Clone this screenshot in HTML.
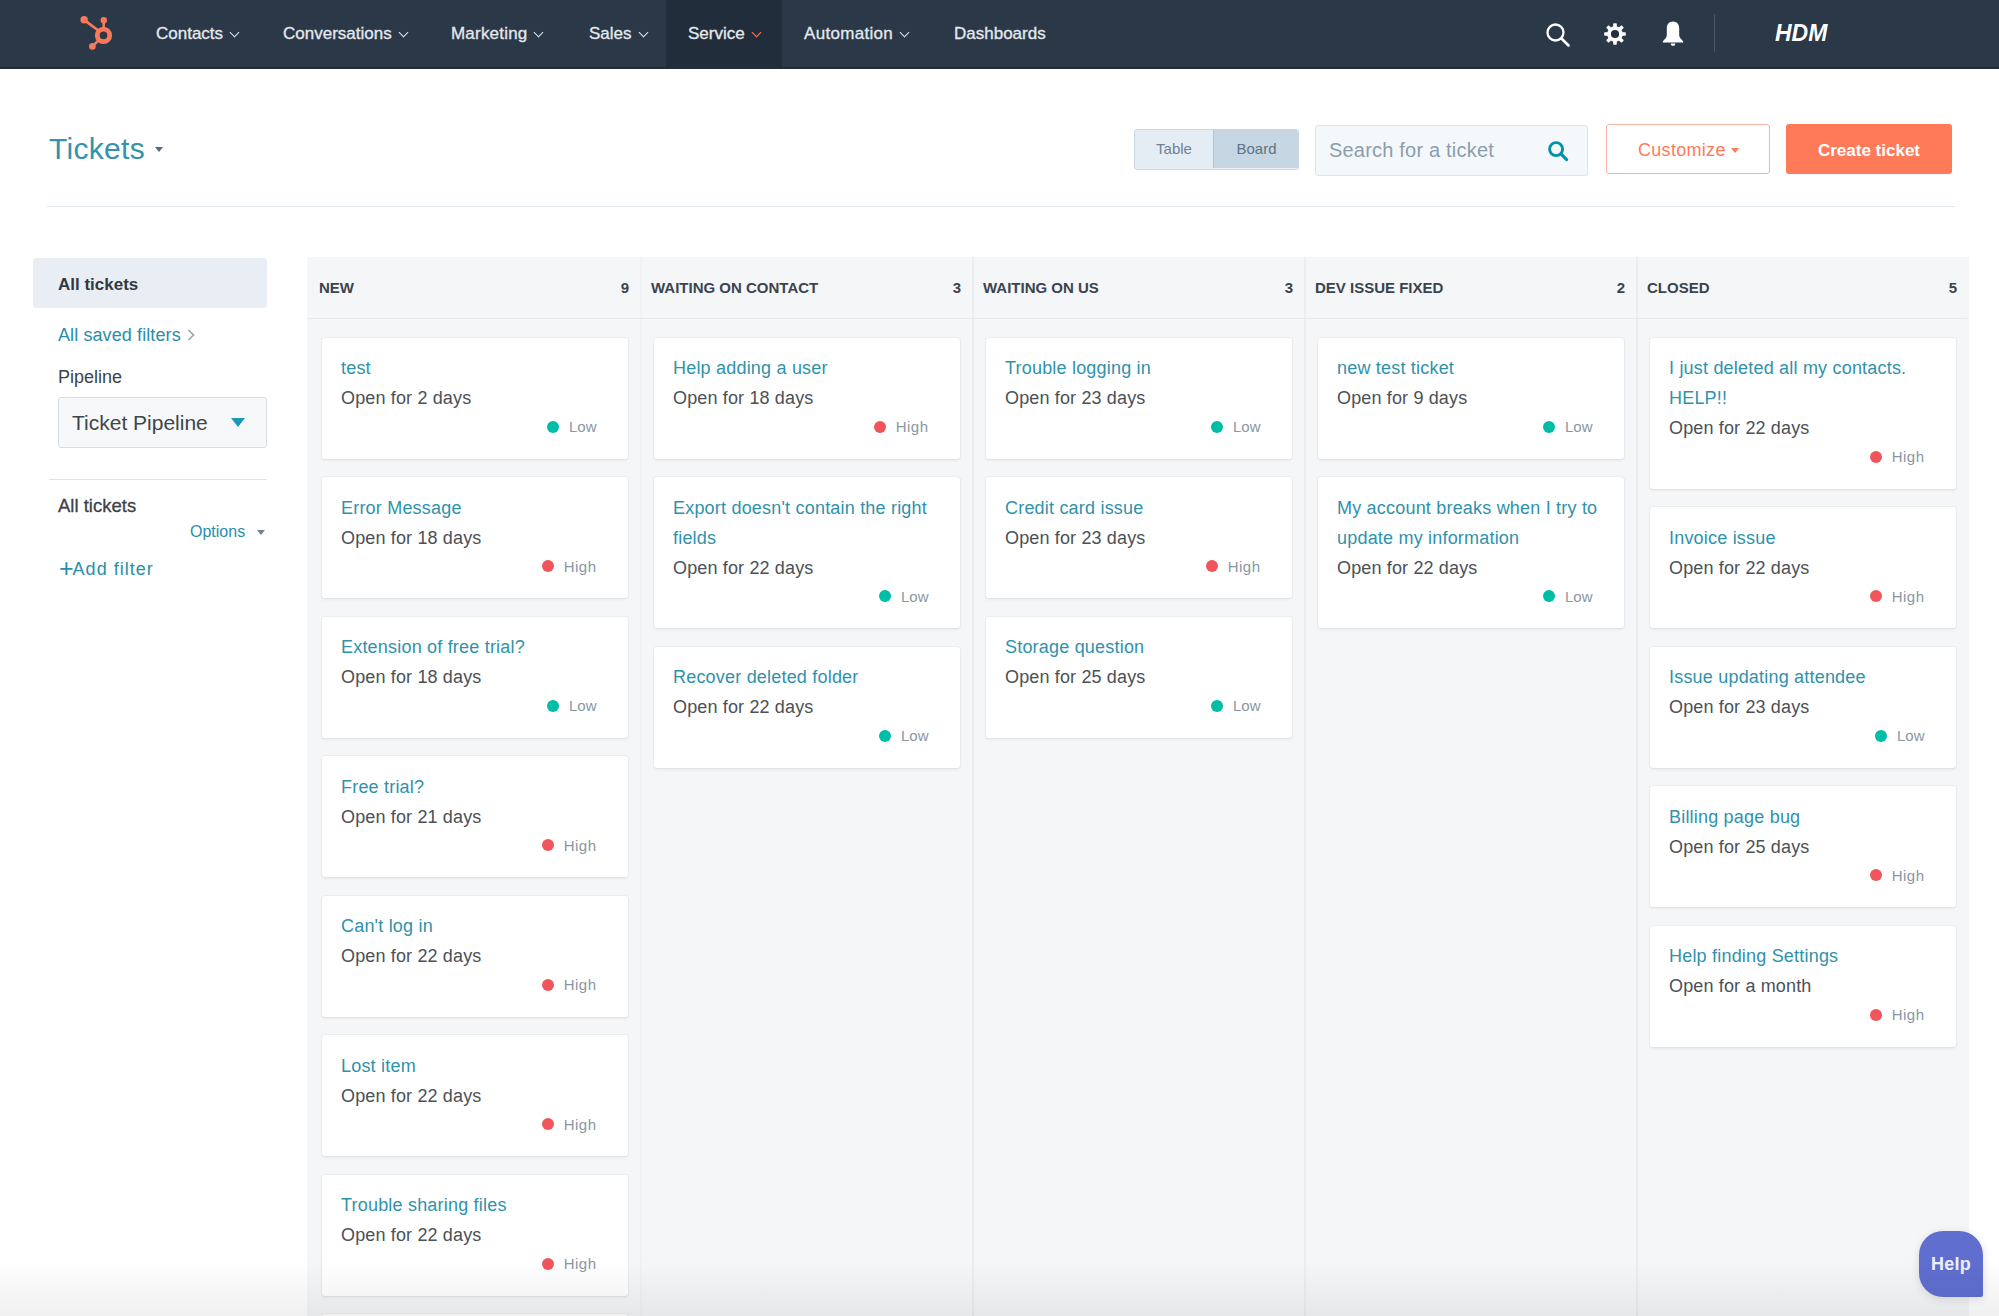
<!DOCTYPE html>
<html><head><meta charset="utf-8">
<style>
*{box-sizing:border-box;margin:0;padding:0}
html,body{width:1999px;height:1316px;overflow:hidden;background:#fff;font-family:"Liberation Sans",sans-serif;color:#33475b}
.nav{position:absolute;left:0;top:0;width:1999px;height:69px;background:#2b3848;border-bottom:2px solid #222d38}
.nav .sel{position:absolute;left:666px;top:0;width:116px;height:67px;background:#212d3b}
.ni{position:absolute;top:22.5px;font-size:17px;line-height:22px;color:#e4e9ee;white-space:nowrap;-webkit-text-stroke:0.3px #e4e9ee}
.chev{display:inline-block;width:7px;height:7px;border-right:1.8px solid #dfe5eb;border-bottom:1.8px solid #dfe5eb;transform:rotate(45deg);margin-left:8px;position:relative;top:-3px}
.title{position:absolute;left:49px;top:129px;font-size:30px;line-height:40px;color:#3592ac;letter-spacing:0.3px}
.hline{position:absolute;left:47px;top:206px;width:1908px;height:1px;background:#e3e8ee}
.board{position:absolute;left:307px;top:257px;width:1662px;height:1059px;background:#f5f6f8}
.colhead{position:absolute;top:257px;width:332px;height:62px;border-bottom:1px solid #e6eaee}
.colhead .cn{position:absolute;left:12px;top:21px;font-size:15px;line-height:20px;font-weight:bold;color:#3a444e}
.colhead .cc{position:absolute;right:10px;top:21px;font-size:15px;line-height:20px;font-weight:bold;color:#3a444e}
.colsep{position:absolute;top:257px;width:2px;height:1059px;background:#ecedf0}
.card{position:absolute;width:306.5px;background:#fff;border-radius:3px;box-shadow:0 0 0 1px rgba(20,40,60,0.035),0 1.5px 3px rgba(0,0,0,0.05);padding:15.5px 31.5px 0 19.5px}
.card .t{font-size:18px;line-height:30px;color:#2f92ac;letter-spacing:0.2px;white-space:nowrap}
.card .b{font-size:18px;line-height:30px;color:#4b5156;letter-spacing:0.15px}
.card .p{font-size:15px;line-height:30px;color:#8a96a3;text-align:right;margin-top:-1px}
.card .p.hi{letter-spacing:0.5px}
.card .p i{display:inline-block;width:12px;height:12px;border-radius:50%;margin-right:10px;position:relative;top:0.5px}
.card .p.lo i{background:#00bda5}
.card .p.hi i{background:#f2545b}

.tcaret{position:absolute;left:155px;top:147px;width:0;height:0;border-left:4.5px solid transparent;border-right:4.5px solid transparent;border-top:5px solid #4f6a86}
.toggle{position:absolute;left:1134px;top:128.5px;width:165px;height:41px;border:1px solid #cbd6e2;border-radius:3px;overflow:hidden;background:#eaf0f6}
.toggle .tb{position:absolute;top:0;height:38px;line-height:37px;font-size:15px;color:#6f8294;text-align:center}
.toggle .tb1{left:0;width:78px;background:#e5edf4}
.toggle .tb2{left:78px;width:86px;background:#c6d6e3;border-left:1px solid #b4c4d4;color:#5f7386}
.search{position:absolute;left:1315px;top:125px;width:273px;height:50.5px;border:1px solid #dfe3eb;border-radius:3px;background:#f5f8fa}
.search .ph{position:absolute;left:13px;top:12px;font-size:20px;line-height:24px;color:#8b9dae;letter-spacing:0.2px}
.search svg{position:absolute;left:231px;top:14px}
.cust{position:absolute;left:1606px;top:124px;width:164px;height:50px;border:1px solid #f5b3a3;border-radius:3px;background:#fff}
.cust span{position:absolute;left:31px;top:13px;font-size:18px;line-height:24px;color:#ff7a59;letter-spacing:0.3px}
.cust i{position:absolute;left:124px;top:23px;width:0;height:0;border-left:4.5px solid transparent;border-right:4.5px solid transparent;border-top:5px solid #ff7a59}
.create{position:absolute;left:1786px;top:124px;width:166px;height:50px;border-radius:3px;background:#ff7a59}
.create span{position:absolute;left:0;width:166px;text-align:center;top:14.5px;font-size:17px;line-height:24px;color:#fff;font-weight:bold}
.side-sel{position:absolute;left:33px;top:258px;width:234px;height:50px;background:#e9eef4;border-radius:3px}
.sd{position:absolute;white-space:nowrap}
.dd{position:absolute;left:58px;top:397px;width:209px;height:51px;border:1px solid #d6dde4;border-radius:3px;background:#f6f8fa}
.dd span{position:absolute;left:13px;top:12px;font-size:21px;line-height:26px;color:#40464c}
.dd i{position:absolute;left:172px;top:20px;width:0;height:0;border-left:7.5px solid transparent;border-right:7.5px solid transparent;border-top:9px solid #1d98bb}
.sline{position:absolute;left:49px;top:479px;width:218px;height:1px;background:#e0e3e7}
.help{position:absolute;left:1919px;top:1230.5px;width:64px;height:66px;background:#5f6ecf;border-radius:24px 24px 2px 24px;color:#eef0ff;font-size:18px;font-weight:bold;line-height:66px;text-align:center;box-shadow:0 2px 10px rgba(0,0,0,0.12);letter-spacing:0.2px}
.bfade{position:absolute;left:0;top:1260px;width:1999px;height:56px;background:linear-gradient(to bottom,rgba(0,0,0,0),rgba(0,0,0,0.06))}
</style></head><body>
<div class="nav">
  <div class="sel"></div>
  <div class="ni" style="left:156px">Contacts<span class="chev"></span></div>
  <div class="ni" style="left:283px">Conversations<span class="chev"></span></div>
  <div class="ni" style="left:451px;letter-spacing:0.2px">Marketing<span class="chev"></span></div>
  <div class="ni" style="left:589px">Sales<span class="chev"></span></div>
  <div class="ni" style="left:688px">Service<span class="chev" style="border-color:#ff7a59"></span></div>
  <div class="ni" style="left:804px;letter-spacing:0.3px">Automation<span class="chev"></span></div>
  <div class="ni" style="left:954px">Dashboards</div>
<svg style="position:absolute;left:70px;top:8px" width="55" height="50" viewBox="0 0 55 50">
<g fill="none" stroke="#f97a5a" stroke-linecap="round">
<circle cx="33.5" cy="27.4" r="6.2" stroke-width="4.8"/>
<line x1="14.1" y1="11.8" x2="29" y2="23" stroke-width="2.8"/>
<line x1="33.8" y1="12.5" x2="33.6" y2="20" stroke-width="2.6"/>
<line x1="22.4" y1="38.4" x2="28.5" y2="32.5" stroke-width="2.6"/>
</g>
<g fill="#f97a5a"><circle cx="14.1" cy="11.8" r="3.7"/><circle cx="33.8" cy="12.2" r="3.2"/><circle cx="22.4" cy="38.4" r="3.3"/></g>
</svg>
<svg style="position:absolute;left:1545px;top:22px" width="26" height="26" viewBox="0 0 26 26"><circle cx="10.5" cy="10.5" r="8" fill="none" stroke="#fff" stroke-width="2.3"/><line x1="16.5" y1="16.5" x2="23.5" y2="23.5" stroke="#fff" stroke-width="2.6" stroke-linecap="round"/></svg>
<svg style="position:absolute;left:1603px;top:21.5px" width="24" height="24" viewBox="-12 -12 24 24"><circle r="7.8" fill="#fff"/><rect x="-1.8" y="-10.8" width="3.6" height="5" rx="0.8" fill="#fff" transform="rotate(0)"/><rect x="-1.8" y="-10.8" width="3.6" height="5" rx="0.8" fill="#fff" transform="rotate(45)"/><rect x="-1.8" y="-10.8" width="3.6" height="5" rx="0.8" fill="#fff" transform="rotate(90)"/><rect x="-1.8" y="-10.8" width="3.6" height="5" rx="0.8" fill="#fff" transform="rotate(135)"/><rect x="-1.8" y="-10.8" width="3.6" height="5" rx="0.8" fill="#fff" transform="rotate(180)"/><rect x="-1.8" y="-10.8" width="3.6" height="5" rx="0.8" fill="#fff" transform="rotate(225)"/><rect x="-1.8" y="-10.8" width="3.6" height="5" rx="0.8" fill="#fff" transform="rotate(270)"/><rect x="-1.8" y="-10.8" width="3.6" height="5" rx="0.8" fill="#fff" transform="rotate(315)"/><circle r="4.1" fill="#252f44"/></svg>
<svg style="position:absolute;left:1661px;top:20px" width="24" height="28" viewBox="0 0 24 28"><path fill="#fff" d="M12 1.5c3.6 0 6.2 2.8 6.2 6.6v6.6c0 1.6.6 2.9 1.7 4.1l2.2 2.4v1.2H1.9v-1.2l2.2-2.4c1.1-1.2 1.7-2.5 1.7-4.1V8.1C5.8 4.3 8.4 1.5 12 1.5z"/><path fill="#fff" d="M9.6 23.6h4.8a2.4 2.4 0 0 1-4.8 0z"/></svg>
<div style="position:absolute;left:1714px;top:14px;width:1px;height:38px;background:#46566a"></div>
<div style="position:absolute;left:1775px;top:19px;font-size:23px;line-height:28px;font-weight:bold;font-style:italic;color:#fff">HDM</div>
</div>
<div class="title">Tickets</div>
<div class="hline"></div>
<div class="tcaret"></div>
<div class="toggle"><div class="tb tb1">Table</div><div class="tb tb2">Board</div></div>
<div class="search"><div class="ph">Search for a ticket</div><svg width="23" height="23" viewBox="0 0 24 24"><circle cx="9.5" cy="9.5" r="6.8" fill="none" stroke="#0091ae" stroke-width="3"/><line x1="14.5" y1="14.5" x2="20.5" y2="20.5" stroke="#0091ae" stroke-width="3.2" stroke-linecap="round"/></svg></div>
<div class="cust"><span>Customize</span><i></i></div>
<div class="create"><span>Create ticket</span></div>
<div class="side-sel"></div>
<div class="sd" style="left:58px;top:273.5px;font-size:17px;line-height:22px;font-weight:bold;color:#33393f">All tickets</div>
<div class="sd" style="left:58px;top:323.5px;font-size:18px;line-height:22px;color:#2a8ea8;letter-spacing:0.1px">All saved filters</div>
<svg style="position:absolute;left:186px;top:328px" width="10" height="14" viewBox="0 0 10 14"><path d="M2.5 2 L7.5 7 L2.5 12" fill="none" stroke="#98a4b0" stroke-width="1.6"/></svg>
<div class="sd" style="left:58px;top:366px;font-size:18px;line-height:22px;color:#3c4248">Pipeline</div>
<div class="dd"><span>Ticket Pipeline</span><i></i></div>
<div class="sline"></div>
<div class="sd" style="left:58px;top:494.5px;font-size:18.5px;line-height:22px;color:#3c4248;-webkit-text-stroke:0.3px #3c4248">All tickets</div>
<div class="sd" style="left:190px;top:521px;font-size:16px;line-height:22px;color:#2a8ea8">Options</div>
<div style="position:absolute;left:257px;top:530px;width:0;height:0;border-left:4.5px solid transparent;border-right:4.5px solid transparent;border-top:5px solid #6f7f8e"></div>
<div class="sd" style="left:59px;top:555px;font-size:18px;line-height:22px;color:#2a8ea8"><span style="font-size:25px;position:relative;top:2px;margin-right:-1px">+</span><span style="letter-spacing:1px">Add filter</span></div>

<div class="board"></div>
<div class="colhead" style="left:307px"><span class="cn">NEW</span><span class="cc">9</span></div>
<div class="colsep" style="left:640px;background:#f1f2f4"></div>
<div class="card" style="left:321.5px;top:337.5px;height:121px"><div class="t">test</div><div class="b">Open for 2 days</div><div class="p lo"><i></i>Low</div></div>
<div class="card" style="left:321.5px;top:477.0px;height:121px"><div class="t">Error Message</div><div class="b">Open for 18 days</div><div class="p hi"><i></i>High</div></div>
<div class="card" style="left:321.5px;top:616.5px;height:121px"><div class="t">Extension of free trial?</div><div class="b">Open for 18 days</div><div class="p lo"><i></i>Low</div></div>
<div class="card" style="left:321.5px;top:756.0px;height:121px"><div class="t">Free trial?</div><div class="b">Open for 21 days</div><div class="p hi"><i></i>High</div></div>
<div class="card" style="left:321.5px;top:895.5px;height:121px"><div class="t">Can't log in</div><div class="b">Open for 22 days</div><div class="p hi"><i></i>High</div></div>
<div class="card" style="left:321.5px;top:1035.0px;height:121px"><div class="t">Lost item</div><div class="b">Open for 22 days</div><div class="p hi"><i></i>High</div></div>
<div class="card" style="left:321.5px;top:1174.5px;height:121px"><div class="t">Trouble sharing files</div><div class="b">Open for 22 days</div><div class="p hi"><i></i>High</div></div>
<div class="card" style="left:321.5px;top:1314.0px;height:121px"><div class="t">Something else</div><div class="b">Open for 22 days</div><div class="p hi"><i></i>High</div></div>
<div class="colhead" style="left:639px"><span class="cn">WAITING ON CONTACT</span><span class="cc">3</span></div>
<div class="colsep" style="left:972px"></div>
<div class="card" style="left:653.5px;top:337.5px;height:121px"><div class="t">Help adding a user</div><div class="b">Open for 18 days</div><div class="p hi"><i></i>High</div></div>
<div class="card" style="left:653.5px;top:477.0px;height:151px"><div class="t">Export doesn't contain the right<br>fields</div><div class="b">Open for 22 days</div><div class="p lo"><i></i>Low</div></div>
<div class="card" style="left:653.5px;top:646.5px;height:121px"><div class="t">Recover deleted folder</div><div class="b">Open for 22 days</div><div class="p lo"><i></i>Low</div></div>
<div class="colhead" style="left:971px"><span class="cn">WAITING ON US</span><span class="cc">3</span></div>
<div class="colsep" style="left:1304px"></div>
<div class="card" style="left:985.5px;top:337.5px;height:121px"><div class="t">Trouble logging in</div><div class="b">Open for 23 days</div><div class="p lo"><i></i>Low</div></div>
<div class="card" style="left:985.5px;top:477.0px;height:121px"><div class="t">Credit card issue</div><div class="b">Open for 23 days</div><div class="p hi"><i></i>High</div></div>
<div class="card" style="left:985.5px;top:616.5px;height:121px"><div class="t">Storage question</div><div class="b">Open for 25 days</div><div class="p lo"><i></i>Low</div></div>
<div class="colhead" style="left:1303px"><span class="cn">DEV ISSUE FIXED</span><span class="cc">2</span></div>
<div class="colsep" style="left:1636px"></div>
<div class="card" style="left:1317.5px;top:337.5px;height:121px"><div class="t">new test ticket</div><div class="b">Open for 9 days</div><div class="p lo"><i></i>Low</div></div>
<div class="card" style="left:1317.5px;top:477.0px;height:151px"><div class="t">My account breaks when I try to<br>update my information</div><div class="b">Open for 22 days</div><div class="p lo"><i></i>Low</div></div>
<div class="colhead" style="left:1635px"><span class="cn">CLOSED</span><span class="cc">5</span></div>
<div class="card" style="left:1649.5px;top:337.5px;height:151px"><div class="t">I just deleted all my contacts.<br>HELP!!</div><div class="b">Open for 22 days</div><div class="p hi"><i></i>High</div></div>
<div class="card" style="left:1649.5px;top:507.0px;height:121px"><div class="t">Invoice issue</div><div class="b">Open for 22 days</div><div class="p hi"><i></i>High</div></div>
<div class="card" style="left:1649.5px;top:646.5px;height:121px"><div class="t">Issue updating attendee</div><div class="b">Open for 23 days</div><div class="p lo"><i></i>Low</div></div>
<div class="card" style="left:1649.5px;top:786.0px;height:121px"><div class="t">Billing page bug</div><div class="b">Open for 25 days</div><div class="p hi"><i></i>High</div></div>
<div class="card" style="left:1649.5px;top:925.5px;height:121px"><div class="t">Help finding Settings</div><div class="b">Open for a month</div><div class="p hi"><i></i>High</div></div>
<div class="help">Help</div>
<div class="bfade"></div>
</body></html>
